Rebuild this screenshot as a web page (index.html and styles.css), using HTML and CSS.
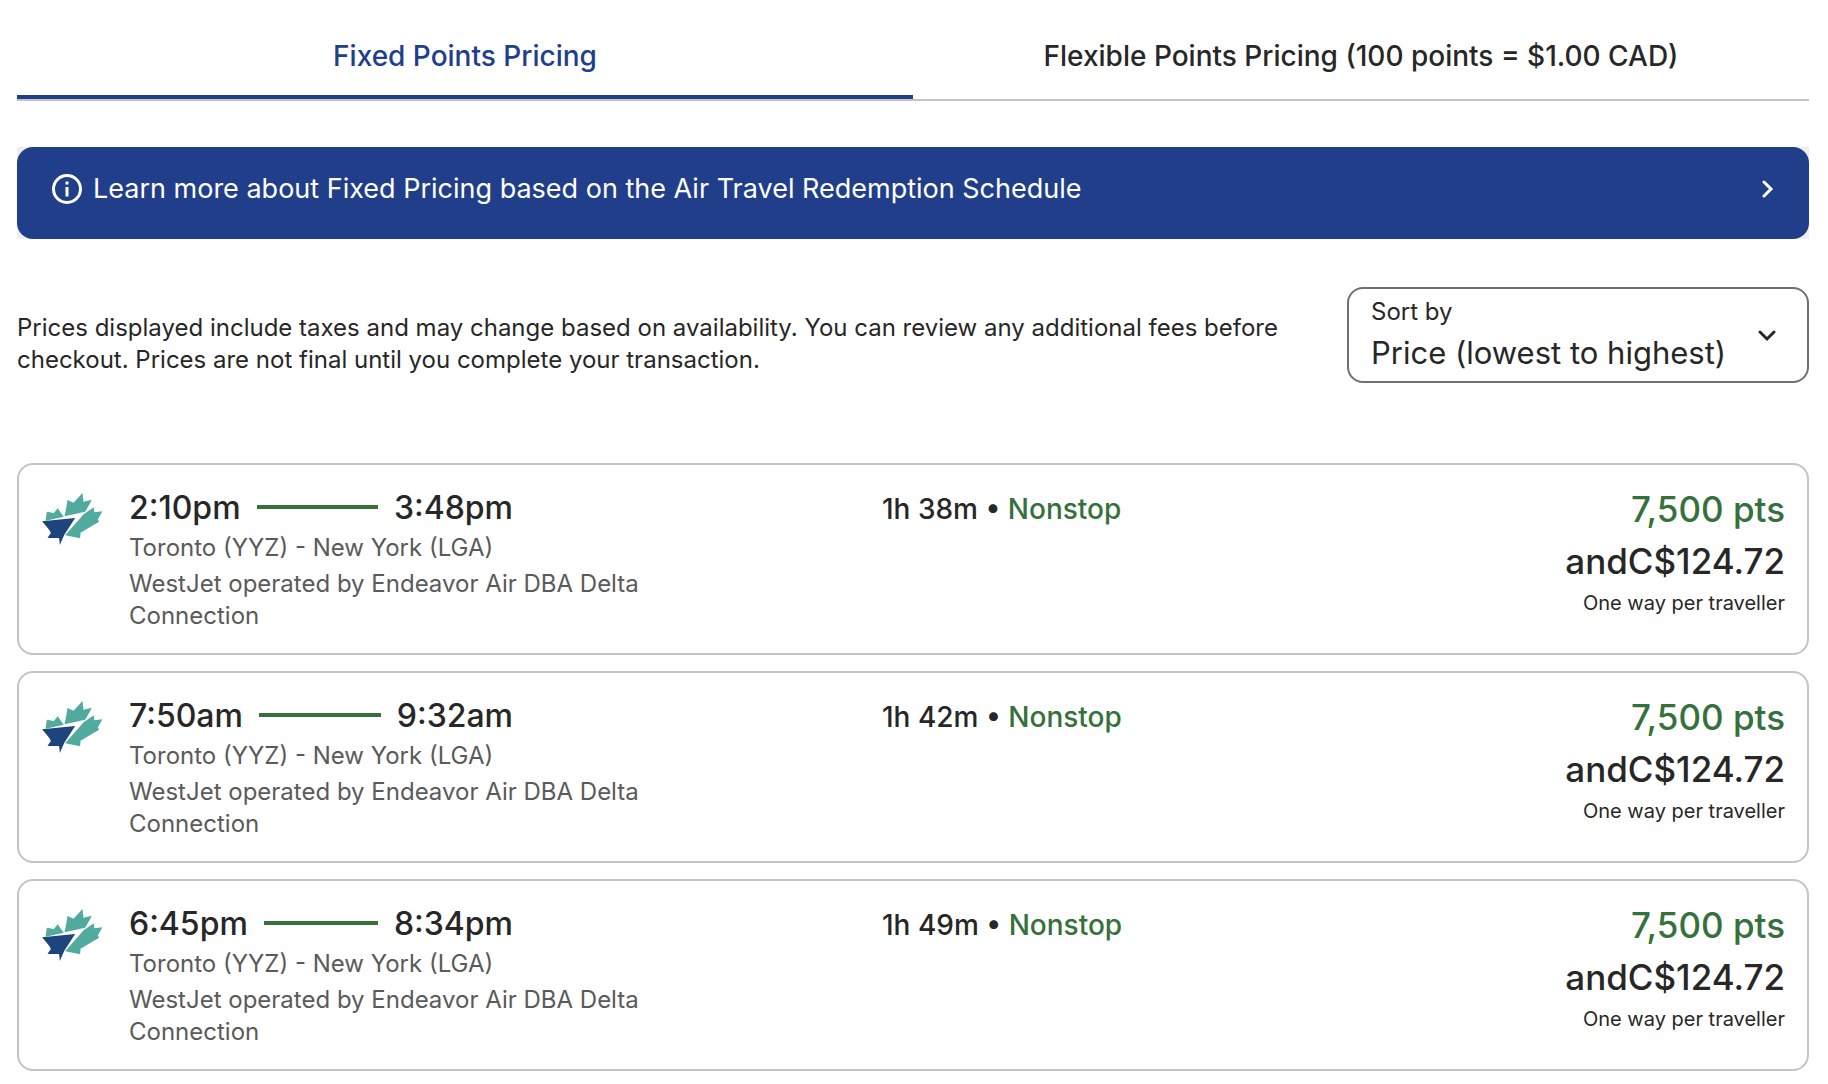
FILE: index.html
```html
<!DOCTYPE html>
<html lang="en">
<head>
    <meta charset="UTF-8">
    <meta name="viewport" content="width=device-width, initial-scale=1.0">
    <title>Flights - Fixed Points Pricing</title>
    <link rel="stylesheet" href="styles.css">
</head>
<body>
    <div class="tabs" role="tablist">
        <button class="tab active" type="button" role="tab" aria-selected="true">Fixed Points Pricing</button>
        <button class="tab" type="button" role="tab" aria-selected="false">Flexible Points Pricing (100 points = $1.00 CAD)</button>
    </div>

    <div class="banner-wrap">
        <button class="banner" type="button">
            <svg class="info-icon" viewBox="0 0 30 30" aria-hidden="true">
                <circle cx="15" cy="15" r="13.5" fill="none" stroke="#fff" stroke-width="3"/>
                <path d="M13.5 7.5h3v3h-3zM13.5 13h3v9.5h-3z" fill="#fff"/>
            </svg>
            <span class="banner-text">Learn more about Fixed Pricing based on the Air Travel Redemption Schedule</span>
            <svg class="arrow-icon" viewBox="0 0 12 18" aria-hidden="true">
                <path d="M2 2l7 7-7 7" fill="none" stroke="#fff" stroke-width="3" stroke-linecap="round"/>
            </svg>
        </button>
    </div>

    <div class="toolbar">
        <p class="notice">Prices displayed include taxes and may change based on availability. You can review any additional fees before checkout. Prices are not final until you complete your transaction.</p>
        <div class="sort">
            <label for="sort-by">Sort by</label>
            <select id="sort-by">
                <option>Price (lowest to highest)</option>
                <option>Price (highest to lowest)</option>
                <option>Duration (shortest)</option>
            </select>
            <svg class="sort-icon" viewBox="0 0 18 12" aria-hidden="true">
                <path d="M2 2l7 7 7-7" fill="none" stroke="#272727" stroke-width="3" stroke-linecap="round"/>
            </svg>
        </div>
    </div>

    <!-- airline logo shared by all the cards -->
    <svg width="0" height="0" class="sprite" aria-hidden="true">
        <symbol id="westjet" viewBox="38 68 182 156">
            <path fill="#51aa9e" d="M105 138l5-24 4-25 18 8 27-29 3 26 25-6-10 19 -10 17z"/>
            <path fill="#51aa9e" d="M48 151l4-27 21 4 12-14 10 15 8 10z"/>
            <path fill="#51aa9e" d="M107 195l56-64 30-20 1 15 25-3-14 24 4 7-56 33-1 17z"/>
            <path fill="#1d447c" d="M38 153l99-10-33 51-13 30-2-21-35 0 10-15-4-8z"/>
        </symbol>
    </svg>

    <div class="flights">
        <article class="flight">
            <svg class="logo" role="img" aria-label="WestJet"><use href="#westjet"/></svg>
            <div class="journey">
                <div class="times"><span>2:10pm</span><span class="line"></span><span>3:48pm</span></div>
                <div class="route">Toronto (YYZ) - New York (LGA)</div>
                <div class="carrier">WestJet operated by Endeavor Air DBA Delta Connection</div>
            </div>
            <div class="duration">1h 38m • <span class="stops">Nonstop</span></div>
            <div class="price">
                <div class="points">7,500 pts</div>
                <div class="cash">andC$124.72</div>
                <div class="per">One way per traveller</div>
            </div>
        </article>

        <article class="flight">
            <svg class="logo" role="img" aria-label="WestJet"><use href="#westjet"/></svg>
            <div class="journey">
                <div class="times"><span>7:50am</span><span class="line"></span><span>9:32am</span></div>
                <div class="route">Toronto (YYZ) - New York (LGA)</div>
                <div class="carrier">WestJet operated by Endeavor Air DBA Delta Connection</div>
            </div>
            <div class="duration">1h 42m • <span class="stops">Nonstop</span></div>
            <div class="price">
                <div class="points">7,500 pts</div>
                <div class="cash">andC$124.72</div>
                <div class="per">One way per traveller</div>
            </div>
        </article>

        <article class="flight">
            <svg class="logo" role="img" aria-label="WestJet"><use href="#westjet"/></svg>
            <div class="journey">
                <div class="times"><span>6:45pm</span><span class="line"></span><span>8:34pm</span></div>
                <div class="route">Toronto (YYZ) - New York (LGA)</div>
                <div class="carrier">WestJet operated by Endeavor Air DBA Delta Connection</div>
            </div>
            <div class="duration">1h 49m • <span class="stops">Nonstop</span></div>
            <div class="price">
                <div class="points">7,500 pts</div>
                <div class="cash">andC$124.72</div>
                <div class="per">One way per traveller</div>
            </div>
        </article>
    </div>
</body>
</html>
```
FILE: styles.css
```css
* {
    box-sizing: border-box;
}
body {
    margin: 0;
    padding: 15px 19px 13px 17px;
    font-family: Inter, "Liberation Sans", sans-serif;
    background: #fff;
    color: #272727;
}
button, select {
    font-family: inherit;
    color: inherit;
}
.tabs {
    display: flex;
    border-bottom: 2px solid #c4c4c8;
}
.tab {
    flex: 1;
    padding: 23px 0 21px;
    border: none;
    border-bottom: 4px solid transparent;
    background: none;
    font-size: 28px;
    font-weight: 500;
    line-height: 36px;
    cursor: pointer;
}
.tab.active {
    color: #213e8a;
    border-bottom-color: #213e8a;
}
.banner-wrap {
    margin-top: 46px;
    background: #eee;
}
.banner {
    display: flex;
    align-items: center;
    width: 100%;
    padding: 24px 35px 32px;
    border: none;
    border-radius: 16px;
    background: #213e8a;
    color: #fff;
    font-size: 27px;
    line-height: 36px;
    text-align: left;
    cursor: pointer;
}
.info-icon {
    width: 30px;
    height: 30px;
    margin-right: 11px;
}
.banner-text {
    flex: 1;
}
.arrow-icon {
    width: 12px;
    height: 18px;
}
.toolbar {
    display: flex;
    justify-content: space-between;
    align-items: center;
    margin-top: 48px;
}
.notice {
    flex: 1;
    max-width: 1264px;
    margin: 0;
    padding-top: 18px;
    font-size: 24px;
    line-height: 32px;
}
.sort {
    position: relative;
    width: 462px;
    padding: 7px 0 5px;
    border: 2px solid #707070;
    border-radius: 16px;
}
.sort label {
    display: block;
    padding-left: 22px;
    font-size: 24px;
    line-height: 32px;
}
.sort select {
    display: block;
    width: 100%;
    height: 48px;
    padding: 0 64px 0 22px;
    border: none;
    background: none;
    appearance: none;
    font-size: 31px;
}
.sort-icon {
    position: absolute;
    top: 41px;
    right: 31px;
    width: 18px;
    height: 12px;
    pointer-events: none;
}
.sprite {
    position: absolute;
}
.flights {
    display: flex;
    flex-direction: column;
    gap: 16px;
    margin-top: 80px;
}
.flight {
    display: flex;
    align-items: flex-start;
    padding: 23px 22px 21px 23px;
    border: 2px solid #c4c4c4;
    border-radius: 16px;
}
.logo {
    flex: none;
    width: 61px;
    height: 52px;
    margin: 5px 26px 0 0;
}
.journey {
    width: 544px;
    margin-right: 209px;
    color: #5a5a5a;
    font-size: 24px;
    line-height: 32px;
}
.times {
    display: flex;
    align-items: center;
    gap: 16px;
    width: 384px;
    color: #272727;
    font-size: 32px;
    font-weight: 500;
    line-height: 40px;
}
.line {
    flex: 1;
    height: 4px;
    margin-bottom: 2px;
    background: #36703c;
}
.route {
    margin: 4px 0;
}
.duration {
    flex: 1;
    font-size: 28px;
    font-weight: 500;
    line-height: 43px;
}
.stops {
    color: #36703c;
}
.price {
    text-align: right;
    font-size: 35px;
    font-weight: 500;
}
.points {
    color: #36703c;
    line-height: 43px;
}
.cash {
    margin-top: 4px;
    line-height: 52px;
}
.per {
    font-size: 20px;
    font-weight: 400;
    line-height: 32px;
}
```
